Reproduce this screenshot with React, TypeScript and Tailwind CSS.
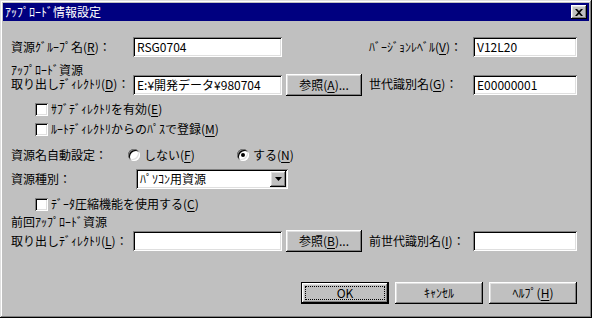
import React from "react";

const sunken =
  "bg-white shadow-[inset_1px_1px_0_#808080,inset_-1px_-1px_0_#ffffff,inset_2px_2px_0_#000000,inset_-2px_-2px_0_#dfdfdf]";
const raised =
  "bg-[#c0c0c0] shadow-[inset_-1px_-1px_0_#000000,inset_1px_1px_0_#ffffff,inset_-2px_-2px_0_#808080,inset_2px_2px_0_#dfdfdf]";

function Acc({ k }: { k: string }) {
  return (
    <>
      (<span className="underline underline-offset-2">{k}</span>)
    </>
  );
}

function TextBox({ value, w }: { value: string; w: string }) {
  return (
    <div className={`${sunken} ${w} h-[20px] flex items-center pl-[4px] text-black`}>
      {value}
    </div>
  );
}

function Button({ children, w = "w-[76px]" }: { children: React.ReactNode; w?: string }) {
  return (
    <div className={`${raised} ${w} h-[22px] flex items-center justify-center text-black`}>
      {children}
    </div>
  );
}

function CheckRow({ children }: { children: React.ReactNode }) {
  return (
    <div className="flex items-center h-[16px] pl-[24px] gap-[3px]">
      <div className={`${sunken} w-[13px] h-[13px]`} />
      <span>{children}</span>
    </div>
  );
}

function Radio({ checked }: { checked?: boolean }) {
  return (
    <div className="w-[12px] h-[12px] rounded-full bg-white shadow-[inset_1px_1px_0_#808080,inset_-1px_-1px_0_#ffffff,inset_2px_2px_0_#000000,inset_-2px_-2px_0_#dfdfdf] flex items-center justify-center">
      {checked && <div className="w-[4px] h-[4px] rounded-full bg-black" />}
    </div>
  );
}

export default function App() {
  return (
    <div className="w-[592px] h-[318px] bg-[#c0c0c0] p-[3px] flex flex-col text-[12px] leading-[14px] text-black font-['Noto_Sans_CJK_JP','MS_UI_Gothic',sans-serif] shadow-[inset_-1px_-1px_0_#000000,inset_1px_1px_0_#dfdfdf,inset_-2px_-2px_0_#808080,inset_2px_2px_0_#ffffff]">
      {/* Title bar */}
      <div className="h-[18px] bg-[#000080] flex items-center pl-[2px] pr-[2px] text-white">
        <span className="flex-1">ｱｯﾌﾟﾛｰﾄﾞ情報設定</span>
        <div className={`${raised} w-[16px] h-[14px] flex items-center justify-center`}>
          <svg width="8" height="7" viewBox="0 0 8 7">
            <path d="M0 0h2l2 2 2-2h2L5 3.5 8 7H6L4 5 2 7H0l3-3.5z" fill="#000" />
          </svg>
        </div>
      </div>

      <div className="flex flex-col pl-[8px]">
        {/* Row 1 */}
        <div className="flex items-center h-[20px] mt-[16px]">
          <span className="w-[122px]">
            資源ｸﾞﾙｰﾌﾟ名<Acc k="R" />：
          </span>
          <TextBox value="RSG0704" w="w-[149px]" />
          <div className="w-[87px]" />
          <span className="w-[104px]">
            ﾊﾞｰｼﾞｮﾝﾚﾍﾞﾙ<Acc k="V" />：
          </span>
          <TextBox value="V12L20" w="w-[104px]" />
        </div>

        {/* Row 2 */}
        <div className="flex items-end mt-[6px]">
          <span className="w-[122px] mb-[5px] whitespace-pre-line">
            {"ｱｯﾌﾟﾛｰﾄﾞ資源\n取り出しﾃﾞｨﾚｸﾄﾘ"}
            <Acc k="D" />：
          </span>
          <div className="mb-[1px]">
            <TextBox value="E:¥開発データ¥980704" w="w-[149px]" />
          </div>
          <div className="ml-[4px]">
            <Button>
              参照<Acc k="A" />...
            </Button>
          </div>
          <span className="w-[104px] ml-[7px] mb-[5px]">
            世代識別名<Acc k="G" />：
          </span>
          <div className="mb-[1px]">
            <TextBox value="E00000001" w="w-[104px]" />
          </div>
        </div>

        <div className="mt-[5px]">
          <CheckRow>
            ｻﾌﾞﾃﾞｨﾚｸﾄﾘを有効<Acc k="E" />
          </CheckRow>
        </div>
        <div className="mt-[4px]">
          <CheckRow>
            ﾙｰﾄﾃﾞｨﾚｸﾄﾘからのﾊﾟｽで登録<Acc k="M" />
          </CheckRow>
        </div>

        {/* Radio row */}
        <div className="flex items-center h-[18px] mt-[9px]">
          <span className="w-[117px]">資源名自動設定：</span>
          <div className="flex items-center gap-[4px] w-[109px]">
            <Radio />
            <span>
              しない<Acc k="F" />
            </span>
          </div>
          <div className="flex items-center gap-[4px]">
            <Radio checked />
            <span>
              する<Acc k="N" />
            </span>
          </div>
        </div>

        {/* Combo row */}
        <div className="flex items-center h-[20px] mt-[5px]">
          <span className="w-[125px]">資源種別：</span>
          <div className={`${sunken} w-[152px] h-[20px] flex items-center p-[2px]`}>
            <span className="flex-1 pl-[2px]">ﾊﾟｿｺﾝ用資源</span>
            <div className={`${raised} w-[16px] h-[16px] flex items-center justify-center`}>
              <svg width="7" height="4" viewBox="0 0 7 4">
                <path d="M0 0h7L3.5 4z" fill="#000" />
              </svg>
            </div>
          </div>
        </div>

        <div className="mt-[7px]">
          <CheckRow>
            ﾃﾞｰﾀ圧縮機能を使用する<Acc k="C" />
          </CheckRow>
        </div>

        <div className="h-[14px] mt-[3px]">前回ｱｯﾌﾟﾛｰﾄﾞ資源</div>
        <div className="flex items-center h-[22px] mt-[1px]">
          <span className="w-[122px]">
            取り出しﾃﾞｨﾚｸﾄﾘ<Acc k="L" />：
          </span>
          <TextBox value="" w="w-[149px]" />
          <div className="ml-[4px]">
            <Button>
              参照<Acc k="B" />...
            </Button>
          </div>
          <span className="w-[104px] ml-[7px]">
            前世代識別名<Acc k="I" />：
          </span>
          <TextBox value="" w="w-[104px]" />
        </div>

        {/* Dialog buttons */}
        <div className="flex justify-end gap-[6px] mt-[30px] pr-[12px]">
          <div className="w-[88px] h-[22px] border border-black">
            <div className={`${raised} w-full h-full p-[3px]`}>
              <div className="w-full h-full border border-dotted border-black flex items-center justify-center">
                OK
              </div>
            </div>
          </div>
          <Button w="w-[88px]">ｷｬﾝｾﾙ</Button>
          <Button w="w-[88px]">
            ﾍﾙﾌﾟ<Acc k="H" />
          </Button>
        </div>
      </div>
    </div>
  );
}
